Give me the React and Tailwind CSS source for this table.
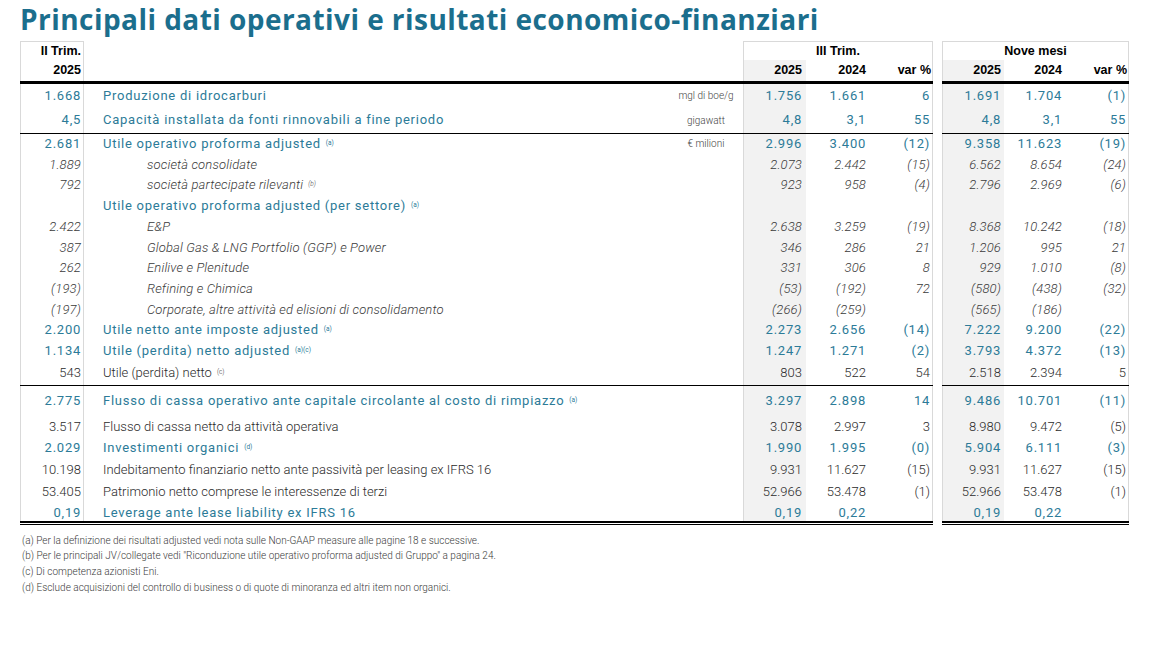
import React from "react";

const GRID = "grid grid-cols-[64px_659px_63px_64px_63px_9px_62px_62px_63px] ml-[20px]";

const R = "h-[20.7px]";

const rows = [
  { t: "teal", h: "h-[23.5px]", l: "1.668", label: "Produzione di idrocarburi", unit: "mgl di boe/g", v: ["1.756", "1.661", "6", "1.691", "1.704", "(1)"] },
  { t: "teal", h: "h-[25px]", l: "4,5", label: "Capacità installata da fonti rinnovabili a fine periodo", unit: "gigawatt", v: ["4,8", "3,1", "55", "4,8", "3,1", "55"] },
  { line: "thin" },
  { t: "teal", h: R, l: "2.681", label: "Utile operativo proforma adjusted", note: "(a)", unit: "€ milioni", v: ["2.996", "3.400", "(12)", "9.358", "11.623", "(19)"] },
  { t: "ital", h: R, l: "1.889", label: "società consolidate", v: ["2.073", "2.442", "(15)", "6.562", "8.654", "(24)"] },
  { t: "ital", h: R, l: "792", label: "società partecipate rilevanti", note: "(b)", v: ["923", "958", "(4)", "2.796", "2.969", "(6)"] },
  { t: "teal", h: R, l: "", label: "Utile operativo proforma adjusted (per settore)", note: "(a)", v: ["", "", "", "", "", ""] },
  { t: "ital", h: R, l: "2.422", label: "E&P", v: ["2.638", "3.259", "(19)", "8.368", "10.242", "(18)"] },
  { t: "ital", h: R, l: "387", label: "Global Gas & LNG Portfolio (GGP) e Power", v: ["346", "286", "21", "1.206", "995", "21"] },
  { t: "ital", h: R, l: "262", label: "Enilive e Plenitude", v: ["331", "306", "8", "929", "1.010", "(8)"] },
  { t: "ital", h: R, l: "(193)", label: "Refining e Chimica", v: ["(53)", "(192)", "72", "(580)", "(438)", "(32)"] },
  { t: "ital", h: R, l: "(197)", label: "Corporate, altre attività ed elisioni di consolidamento", v: ["(266)", "(259)", "", "(565)", "(186)", ""] },
  { t: "teal", h: R, l: "2.200", label: "Utile netto ante imposte adjusted", note: "(a)", v: ["2.273", "2.656", "(14)", "7.222", "9.200", "(22)"] },
  { t: "teal", h: R, l: "1.134", label: "Utile (perdita) netto adjusted", note: "(a)(c)", v: ["1.247", "1.271", "(2)", "3.793", "4.372", "(13)"] },
  { t: "plain", h: "h-[23.5px]", l: "543", label: "Utile (perdita) netto", note: "(c)", v: ["803", "522", "54", "2.518", "2.394", "5"] },
  { line: "thin" },
  { t: "teal", h: "h-[30px]", l: "2.775", label: "Flusso di cassa operativo ante capitale circolante al costo di rimpiazzo", note: "(a)", v: ["3.297", "2.898", "14", "9.486", "10.701", "(11)"] },
  { t: "plain", h: "h-[21.5px]", l: "3.517", label: "Flusso di cassa netto da attività operativa", v: ["3.078", "2.997", "3", "8.980", "9.472", "(5)"] },
  { t: "teal", h: "h-[21px]", l: "2.029", label: "Investimenti organici", note: "(d)", v: ["1.990", "1.995", "(0)", "5.904", "6.111", "(3)"] },
  { t: "plain", h: "h-[23px]", l: "10.198", label: "Indebitamento finanziario netto ante passività per leasing ex IFRS 16", v: ["9.931", "11.627", "(15)", "9.931", "11.627", "(15)"] },
  { t: "plain", h: "h-[22px]", l: "53.405", label: "Patrimonio netto comprese le interessenze di terzi", v: ["52.966", "53.478", "(1)", "52.966", "53.478", "(1)"] },
  { t: "teal", h: "h-[17.5px]", l: "0,19", label: "Leverage ante lease liability ex IFRS 16", v: ["0,19", "0,22", "", "0,19", "0,22", ""] },
];

const STYLE = {
  teal: "text-[#2c7b98] font-normal tracking-[0.75px] text-[13px]",
  ital: "text-[#3a3a3a] font-light italic tracking-[0.15px] text-[13px]",
  plain: "text-[#2a2a2a] font-light text-[13px]",
};

const BORDER = "border-[#d9d9d9]";

function Line({ kind }) {
  if (kind === "thick") {
    return (
      <div className={GRID}>
        <div className="col-span-5 h-[3px] bg-black" />
        <div />
        <div className="col-span-3 h-[3px] bg-black" />
      </div>
    );
  }
  if (kind === "double") {
    return (
      <div className={GRID}>
        <div className="col-span-5 flex flex-col">
          <div className="h-[2px] bg-black" />
          <div className="h-[1px]" />
          <div className="h-[1px] bg-black" />
        </div>
        <div />
        <div className="col-span-3 flex flex-col">
          <div className="h-[2px] bg-black" />
          <div className="h-[1px]" />
          <div className="h-[1px] bg-black" />
        </div>
      </div>
    );
  }
  return (
    <div className={GRID}>
      <div className="col-span-5 h-[1px] bg-black" />
      <div />
      <div className="col-span-3 h-[1px] bg-black" />
    </div>
  );
}

function Note({ children }) {
  return <span className="ml-[5px] text-[6.5px] tracking-normal align-[3px]">{children}</span>;
}

function Row({ r }) {
  const s = STYLE[r.t];
  const indent = r.t === "ital" ? "pl-[63px]" : "pl-[19px]";
  return (
    <div className={`${GRID} ${r.h} ${s} whitespace-nowrap`}>
      <div className={`flex items-center justify-end pr-[2px] border-l border-r ${BORDER}`}>{r.l}</div>
      <div className="flex items-center">
        <span className={indent}>
          {r.label}
          {r.note && <Note>{r.note}</Note>}
        </span>
        {r.unit && (
          <span className="ml-auto w-[74px] text-center text-[10px] font-light not-italic tracking-normal text-[#444]">{r.unit}</span>
        )}
      </div>
      <div className={`flex items-center justify-end pr-[4px] bg-[#f2f2f2] border-l ${BORDER}`}>{r.v[0]}</div>
      <div className="flex items-center justify-end pr-[4px]">{r.v[1]}</div>
      <div className={`flex items-center justify-end pr-[2px] border-r ${BORDER}`}>{r.v[2]}</div>
      <div />
      <div className={`flex items-center justify-end pr-[3px] bg-[#f2f2f2] border-l ${BORDER}`}>{r.v[3]}</div>
      <div className="flex items-center justify-end pr-[4px]">{r.v[4]}</div>
      <div className={`flex items-center justify-end pr-[2px] border-r ${BORDER}`}>{r.v[5]}</div>
    </div>
  );
}

export default function App() {
  const head = "font-['Liberation_Sans',Arial,sans-serif] font-bold text-[12.5px] text-black";
  return (
    <div className="w-[1167px] h-[646px] bg-white overflow-hidden font-[Roboto,sans-serif]">
      <div className="h-[41px] pl-[20px]">
        <h1 className="font-['Open_Sans',sans-serif] font-bold text-[28px] leading-[38px] text-[#1b6e8d] tracking-[0.45px] whitespace-nowrap">
          Principali dati operativi e risultati economico-finanziari
        </h1>
      </div>

      {/* header row 1 */}
      <div className={`${GRID} h-[19px] ${head}`}>
        <div className={`flex items-center justify-end pr-[2px] border-l border-r border-t ${BORDER}`}>II Trim.</div>
        <div />
        <div className={`col-span-3 flex items-center justify-center border-l border-r border-t ${BORDER}`}>III Trim.</div>
        <div />
        <div className={`col-span-3 flex items-center justify-center border-l border-r border-t ${BORDER}`}>Nove mesi</div>
      </div>
      {/* header row 2 */}
      <div className={`${GRID} h-[21px] ${head}`}>
        <div className={`flex items-center justify-end pr-[2px] border-l border-r ${BORDER}`}>2025</div>
        <div />
        <div className={`flex items-center justify-end pr-[4px] bg-[#f2f2f2] border-l ${BORDER}`}>2025</div>
        <div className="flex items-center justify-end pr-[4px]">2024</div>
        <div className={`flex items-center justify-end pr-[1px] border-r ${BORDER}`}>var %</div>
        <div />
        <div className={`flex items-center justify-end pr-[3px] bg-[#f2f2f2] border-l ${BORDER}`}>2025</div>
        <div className="flex items-center justify-end pr-[4px]">2024</div>
        <div className={`flex items-center justify-end pr-[1px] border-r ${BORDER}`}>var %</div>
      </div>
      <Line kind="thick" />

      {rows.map((r, i) => (r.line ? <Line key={i} kind={r.line} /> : <Row key={i} r={r} />))}

      <Line kind="double" />

      <div className="mt-[8px] pl-[22px] text-[10px] leading-[15.7px] font-light text-[#3a3a3a] font-[Roboto,sans-serif]">
        <p>(a) Per la definizione dei risultati adjusted vedi nota sulle Non-GAAP measure alle pagine 18 e successive.</p>
        <p>(b) Per le principali JV/collegate vedi "Riconduzione utile operativo proforma adjusted di Gruppo" a pagina 24.</p>
        <p>(c) Di competenza azionisti Eni.</p>
        <p>(d) Esclude acquisizioni del controllo di business o di quote di minoranza ed altri item non organici.</p>
      </div>
    </div>
  );
}
